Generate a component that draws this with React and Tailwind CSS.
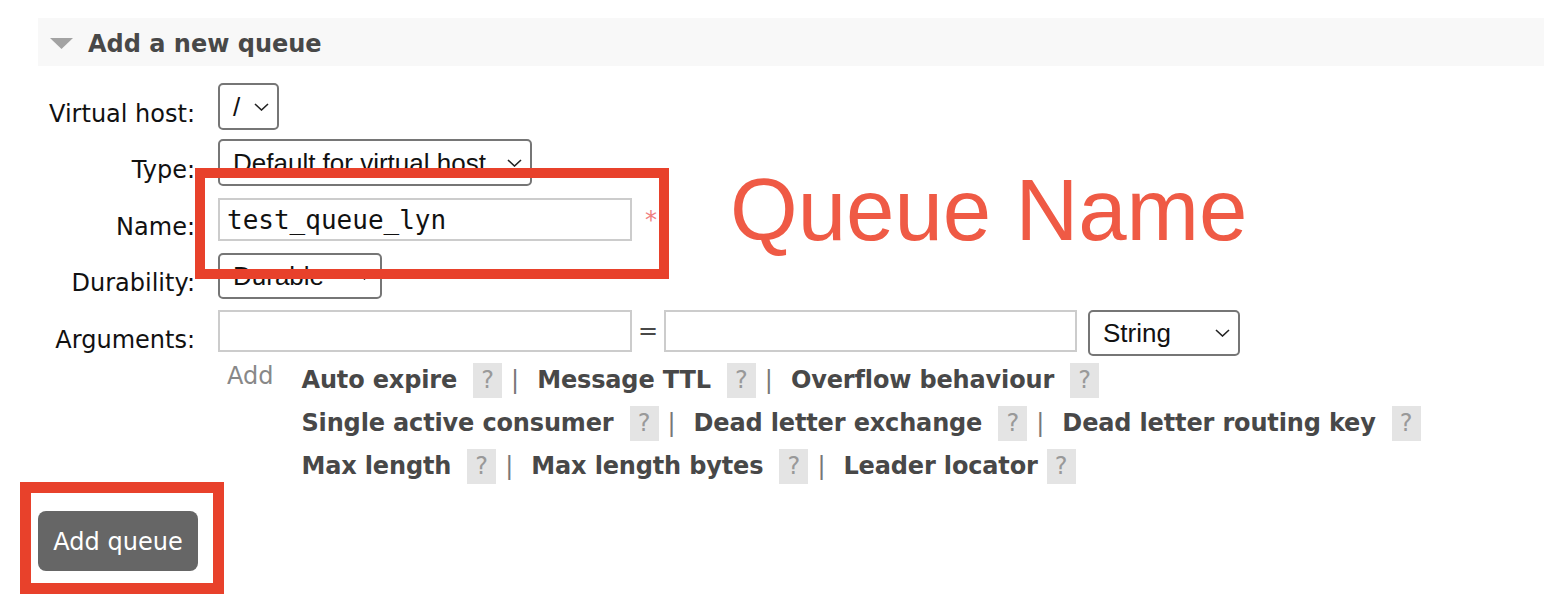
import React from "react";

const linkRows = [
  [
    { name: "Auto expire" },
    { name: "Message TTL" },
    { name: "Overflow behaviour" },
  ],
  [
    { name: "Single active consumer" },
    { name: "Dead letter exchange" },
    { name: "Dead letter routing key" },
  ],
  [
    { name: "Max length" },
    { name: "Max length bytes" },
    { name: "Leader locator", tight: true },
  ],
];

function Chevron() {
  return (
    <svg width="15" height="8" viewBox="0 0 15 8" className="ml-auto shrink-0">
      <polyline points="1,1 7.5,7 14,1" fill="none" stroke="#222" strokeWidth="1.6" />
    </svg>
  );
}

function FakeSelect({ value, className }) {
  return (
    <div
      className={
        "flex items-center rounded-[5px] border-2 border-[#767676] bg-white pl-[13px] pr-[8px] font-['Liberation_Sans',Arial,sans-serif] text-[26px] leading-[30px] text-[#111] " +
        className
      }
    >
      <span className="whitespace-nowrap">{value}</span>
      <Chevron />
    </div>
  );
}

function TextBox({ value, className }) {
  return (
    <input
      readOnly
      value={value}
      className={
        "h-[42px] border-2 border-[#cccccc] bg-white pl-[7px] font-['DejaVu_Sans_Mono',monospace] text-[26px] text-[#111] outline-none " +
        className
      }
    />
  );
}

function Row({ label, className, children }) {
  return (
    <div className={"flex items-center " + className}>
      <div className="w-[195px] pt-[14px] text-right text-[24px] leading-[28px] text-[#111]">
        {label}
      </div>
      <div className="ml-[23px] flex items-start">{children}</div>
    </div>
  );
}

function HelpBox({ tight }) {
  return (
    <span
      className={
        "flex h-[35px] w-[29px] items-center justify-center bg-[#e4e4e4] text-[24px] text-[#999] " +
        (tight ? "ml-[9px]" : "ml-[16px]")
      }
    >
      ?
    </span>
  );
}

export default function App() {
  return (
    <div className="relative h-[605px] w-[1544px] overflow-hidden bg-white pt-[18px] font-['DejaVu_Sans',Verdana,sans-serif]">
      {/* section header */}
      <div className="ml-[38px] flex h-[48px] items-center bg-[#f8f8f8] pt-[2px]">
        <svg width="23" height="11" viewBox="0 0 23 11" className="ml-[12px]">
          <polygon points="0,0 23,0 11.5,11" fill="#a3a3a3" />
        </svg>
        <span className="ml-[15px] pt-[2px] text-[24px] font-bold leading-[28px] text-[#484848]">
          Add a new queue
        </span>
      </div>

      <div className="mt-[17px] flex flex-col">
        <Row label="Virtual host:">
          <FakeSelect value="/" className="h-[47px] w-[61px]" />
        </Row>
        <Row label="Type:" className="mt-[9px]">
          <FakeSelect value="Default for virtual host" className="h-[47px] w-[314px]" />
        </Row>
        <Row label="Name:" className="mt-[12px]">
          <TextBox value="test_queue_lyn" className="h-[43px] w-[414px]" />
          <span className="ml-[13px] flex h-[43px] items-center text-[24px] leading-[28px] text-[#f08080]">
            *
          </span>
        </Row>
        <Row label="Durability:" className="mt-[12px]">
          <FakeSelect value="Durable" className="h-[46px] w-[164px]" />
        </Row>
        <Row label="Arguments:" className="mt-[11px]">
          <TextBox value="" className="w-[414px]" />
          <span className="flex h-[42px] w-[32px] items-center justify-center text-[24px] text-[#484848]">
            =
          </span>
          <TextBox value="" className="w-[413px]" />
          <FakeSelect value="String" className="ml-[11px] h-[46px] w-[152px]" />
        </Row>

        <div className="mt-[6px] flex pl-[227px]">
          <span className="text-[24px] leading-[28px] text-[#888]">Add</span>
          <div className="ml-[28px] flex flex-col gap-[8px]">
            {linkRows.map((items, i) => (
              <div key={i} className="flex h-[35px] items-center pt-[1px] text-[24px] leading-[28px]">
                {items.map((item, j) => (
                  <React.Fragment key={item.name}>
                    {j > 0 && (
                      <span className="ml-[9px] mr-[18px] text-[#777]">|</span>
                    )}
                    <span className="whitespace-nowrap font-bold tracking-[-0.15px] text-[#484848]">
                      {item.name}
                    </span>
                    <HelpBox tight={item.tight} />
                  </React.Fragment>
                ))}
              </div>
            ))}
          </div>
        </div>
      </div>

      <button className="ml-[38px] mt-[28px] flex h-[60px] w-[160px] items-center justify-center rounded-[8px] bg-[#666666] pt-[2px] text-[24px] text-white">
        Add queue
      </button>

      {/* annotations drawn over the form */}
      <div className="pointer-events-none absolute left-[195px] top-[168px] h-[111px] w-[474px] border-[10px] border-[#e8412b]" />
      <div className="pointer-events-none absolute left-[20px] top-[482px] h-[112px] w-[204px] border-[11px] border-[#e8412b]" />
      <div className="pointer-events-none absolute left-[730px] top-[166px] whitespace-nowrap font-['Liberation_Sans',Arial,sans-serif] text-[87px] leading-[87px] text-[#ef5a45]">
        Queue Name
      </div>
    </div>
  );
}
